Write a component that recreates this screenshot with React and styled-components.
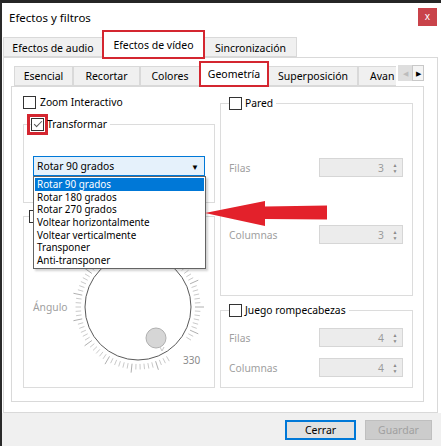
import React from 'react'
import styled, { createGlobalStyle } from 'styled-components'

const GlobalStyle = createGlobalStyle`
  html, body { margin: 0; padding: 0; background: #fff; }
  body { font-family: "Noto Sans", "Open Sans", sans-serif; color: #000; }
  * { box-sizing: border-box; }
`

const outerTabs = [
  { label: 'Efectos de audio', w: 100 },
  { label: 'Efectos de vídeo', w: 101, active: true },
  { label: 'Sincronización', w: 93 },
]

const innerTabs = [
  { label: 'Esencial', w: 59 },
  { label: 'Recortar', w: 67 },
  { label: 'Colores', w: 60 },
  { label: 'Geometría', w: 68, active: true },
  { label: 'Superposición', w: 90 },
  { label: 'Avan', w: 38, cut: true },
]

const options = [
  'Rotar 90 grados',
  'Rotar 180 grados',
  'Rotar 270 grados',
  'Voltear horizontalmente',
  'Voltear verticalmente',
  'Transponer',
  'Anti-transponer',
]

export default function App() {
  return (
    <>
      <GlobalStyle />
      <Window>
        <TitleBar>
          <Title>Efectos y filtros</Title>
          <CloseBtn>x</CloseBtn>
        </TitleBar>

        <OuterTabRow>
          {outerTabs.map((t) => (
            <OuterTab key={t.label} $w={t.w} $active={t.active}>{t.label}</OuterTab>
          ))}
        </OuterTabRow>

        <OuterPanel>
          <InnerTabRow>
            <TabStrip>
              {innerTabs.map((t) => (
                <InnerTab key={t.label} $w={t.w} $active={t.active} $cut={t.cut}>{t.label}</InnerTab>
              ))}
            </TabStrip>
            <ScrollBtn $disabled>◀</ScrollBtn>
            <ScrollBtn>▶</ScrollBtn>
          </InnerTabRow>

          <InnerPanel>
            <Column>
              <CheckRow>
                <Box />
                <span>Zoom Interactivo</span>
              </CheckRow>

              <Group $pad="25px 9px 26px 9px" $mt={8}>
                <Legend $ml={-2}>
                  <Box $marked>
                    <CheckMark />
                  </Box>
                  <span>Transformar</span>
                </Legend>
                <ComboWrap>
                  <Combo>
                    <span>Rotar 90 grados</span>
                    <ComboArrow>▼</ComboArrow>
                  </Combo>
                  <DropList>
                    {options.map((o, i) => (
                      <DropItem key={o} $selected={i === 0}>{o}</DropItem>
                    ))}
                  </DropList>
                  <RedArrow width="124" height="30" viewBox="0 0 124 30">
                    <polygon points="0,15 60,3 60,8.5 122,7.5 122,21.5 60,21 60,28" fill="#e3212b" />
                  </RedArrow>
                </ComboWrap>
              </Group>

              <Group $pad="14px 9px 10px 9px" $mt={6}>
                <Legend $ml={-4}>
                  <Box />
                </Legend>
                <DialRow>
                  <Muted>Ángulo</Muted>
                  <Dial />
                </DialRow>
              </Group>
            </Column>

            <Column>
              <Group $pad="48px 9px 51px 8px" $gap={48}>
                <Legend>
                  <Box />
                  <span>Pared</span>
                </Legend>
                <SpinRow label="Filas" value={3} />
                <SpinRow label="Columnas" value={3} />
              </Group>

              <Group $pad="11px 9px 10px 8px" $gap={11} $mt={7}>
                <Legend>
                  <Box />
                  <span>Juego rompecabezas</span>
                </Legend>
                <SpinRow label="Filas" value={4} />
                <SpinRow label="Columnas" value={4} />
              </Group>
            </Column>
          </InnerPanel>
        </OuterPanel>

        <Footer>
          <Button $primary>Cerrar</Button>
          <Button $disabled>Guardar</Button>
        </Footer>
      </Window>
    </>
  )
}

function SpinRow({ label, value }) {
  return (
    <Row>
      <Muted>{label}</Muted>
      <Spin>
        <SpinValue>{value}</SpinValue>
        <SpinArrows>
          <span>▲</span>
          <span>▼</span>
        </SpinArrows>
      </Spin>
    </Row>
  )
}

function Dial() {
  const cx = 70
  const cy = 70
  const ticks = []
  for (let a = 0; a < 360; a += 4) {
    if (a >= 34 && a <= 56) continue
    const rad = (a * Math.PI) / 180
    const major = a % 24 === 0
    const r1 = 57
    const r2 = major ? 66 : 62.5
    ticks.push(
      <line
        key={a}
        x1={cx + r1 * Math.cos(rad)}
        y1={cy + r1 * Math.sin(rad)}
        x2={cx + r2 * Math.cos(rad)}
        y2={cy + r2 * Math.sin(rad)}
        stroke={major ? '#b0b0b0' : '#cacaca'}
        strokeWidth="1"
      />
    )
  }
  return (
    <svg width="140" height="140" viewBox="0 0 140 140">
      {ticks}
      <circle cx={cx} cy={cy} r="53" fill="#fff" stroke="#5a5a5a" strokeWidth="1" />
      <circle cx="88" cy="101" r="10" fill="#d6d6d6" stroke="#b0b0b0" strokeWidth="1" />
      <path d="M92 110 L94 114 L96 110" fill="none" stroke="#c8c8c8" strokeWidth="1" />
      <text x="115" y="127" fontSize="10" fill="#8a8a8a" fontFamily="Noto Sans, sans-serif">330</text>
    </svg>
  )
}

const Window = styled.div`
  width: 441px;
  height: 446px;
  display: flex;
  flex-direction: column;
  border-left: 2px solid #2a2a2a;
  border-top: 3px solid #262626;
  background: #fff;
  overflow: hidden;
`

const TitleBar = styled.div`
  height: 28px;
  flex: none;
  display: flex;
  align-items: center;
  justify-content: space-between;
  padding: 0 4px 0 7px;
`

const Title = styled.div`
  font-size: 11.5px;
`

const CloseBtn = styled.div`
  width: 19px;
  height: 18px;
  background: #c9434a;
  color: #fff;
  font-size: 10px;
  display: flex;
  align-items: center;
  justify-content: center;
  padding-bottom: 2px;
`

const OuterTabRow = styled.div`
  height: 26px;
  flex: none;
  display: flex;
  align-items: flex-end;
  padding-left: 1px;
`

const OuterTab = styled.div`
  width: ${(p) => p.$w}px;
  height: ${(p) => (p.$active ? 27 : 20)}px;
  margin-bottom: ${(p) => (p.$active ? -1 : 0)}px;
  background: ${(p) => (p.$active ? '#fff' : '#f0f0f0')};
  border: 1px solid #d9d9d9;
  border-bottom: ${(p) => (p.$active ? 'none' : '1px solid #d9d9d9')};
  outline: ${(p) => (p.$active ? '2px solid #d42630' : 'none')};
  outline-offset: -1px;
  position: relative;
  z-index: ${(p) => (p.$active ? 2 : 0)};
  display: flex;
  align-items: center;
  justify-content: center;
  font-size: 10.5px;
  padding-top: ${(p) => (p.$active ? 0 : 1)}px;
`

const OuterPanel = styled.div`
  width: 435px;
  height: 356px;
  flex: none;
  margin-left: 1px;
  border: 1px solid #d9d9d9;
  padding: 0 13px 10px 7px;
  display: flex;
  flex-direction: column;
`

const InnerTabRow = styled.div`
  height: 28px;
  flex: none;
  display: flex;
  align-items: flex-start;
  padding-left: 3px;
`

const TabStrip = styled.div`
  flex: 1;
  height: 29px;
  display: flex;
  align-items: flex-end;
  overflow: hidden;
`

const InnerTab = styled.div`
  flex: none;
  width: ${(p) => p.$w}px;
  height: ${(p) => (p.$active ? 24 : 20)}px;
  margin-bottom: 1px;
  background: ${(p) => (p.$active ? '#fff' : '#f0f0f0')};
  border: 1px solid #d9d9d9;
  border-right: ${(p) => (p.$cut ? 'none' : '1px solid #d9d9d9')};
  border-bottom: ${(p) => (p.$active ? '1px solid #fff' : '1px solid #d9d9d9')};
  outline: ${(p) => (p.$active ? '2px solid #d42630' : 'none')};
  outline-offset: -1px;
  position: relative;
  z-index: ${(p) => (p.$active ? 2 : 0)};
  display: flex;
  align-items: center;
  justify-content: ${(p) => (p.$cut ? 'flex-start' : 'center')};
  padding-left: ${(p) => (p.$cut ? 11 : 0)}px;
  font-size: 10.5px;
  white-space: nowrap;
`

const ScrollBtn = styled.div`
  flex: none;
  width: ${(p) => (p.$disabled ? 14 : 12)}px;
  height: 16px;
  margin-top: 7px;
  background: ${(p) => (p.$disabled ? '#dedede' : '#f4f4f4')};
  border: 1px solid ${(p) => (p.$disabled ? '#dedede' : '#c8c8c8')};
  color: ${(p) => (p.$disabled ? '#bcbcbc' : '#000')};
  font-size: 7px;
  display: flex;
  align-items: center;
  justify-content: center;
`

const InnerPanel = styled.div`
  height: 316px;
  flex: none;
  border: 1px solid #d9d9d9;
  padding: 9px 10px 13px 11px;
  display: grid;
  grid-template-columns: 192px 193px;
  column-gap: 5px;
  align-items: start;
  font-size: 10.3px;
`

const Column = styled.div`
  display: flex;
  flex-direction: column;
`

const CheckRow = styled.div`
  height: 13px;
  display: flex;
  align-items: center;
  gap: 4px;
  line-height: 13px;
`

const Box = styled.span`
  flex: none;
  width: 13px;
  height: 13px;
  border: 1px solid #333;
  background: #fff;
  display: inline-flex;
  align-items: center;
  justify-content: center;
  outline: ${(p) => (p.$marked ? '3px solid #d42630' : 'none')};
  outline-offset: 1px;
`

const CheckMark = styled.span`
  width: 8px;
  height: 4px;
  border-left: 1.5px solid #555;
  border-bottom: 1.5px solid #555;
  transform: translateY(-1px) rotate(-45deg);
`

const Group = styled.fieldset`
  margin: ${(p) => p.$mt || 0}px 0 0 0;
  padding: ${(p) => p.$pad};
  min-width: 0;
  border: 1px solid #dcdcdc;
  display: flex;
  flex-direction: column;
  gap: ${(p) => p.$gap || 0}px;
`

const Legend = styled.legend`
  height: 14px;
  padding: 0 3px 0 0;
  margin-left: ${(p) => p.$ml || 0}px;
  display: flex;
  align-items: center;
  gap: 3px;
  line-height: 14px;
  background: #fff;
`

const ComboWrap = styled.div`
  position: relative;
  width: 172px;
`

const Combo = styled.div`
  height: 20px;
  border: 1px solid #0078d7;
  background: #e5f1fb;
  padding: 0 0 0 3px;
  display: flex;
  align-items: center;
  justify-content: space-between;
`

const ComboArrow = styled.span`
  font-size: 8px;
  width: 18px;
  text-align: center;
`

const DropList = styled.div`
  position: absolute;
  top: 100%;
  left: 0;
  width: 173px;
  border: 1px solid #646464;
  padding: 1px;
  background: #fff;
  box-shadow: 2px 2px 2px rgba(0, 0, 0, 0.18);
  z-index: 5;
`

const DropItem = styled.div`
  height: 12.7px;
  line-height: 12.7px;
  padding-left: 2px;
  font-size: 9.9px;
  white-space: nowrap;
  background: ${(p) => (p.$selected ? '#0078d7' : 'transparent')};
  color: ${(p) => (p.$selected ? '#fff' : '#000')};
`

const RedArrow = styled.svg`
  position: absolute;
  left: 172px;
  top: 42px;
  z-index: 6;
`

const DialRow = styled.div`
  display: grid;
  grid-template-columns: 35px 140px;
  align-items: center;
`

const Muted = styled.span`
  color: #a0a0a0;
`

const Row = styled.div`
  height: 19px;
  display: flex;
  align-items: center;
  justify-content: space-between;
`

const Spin = styled.div`
  width: 84px;
  height: 19px;
  background: #ececec;
  border: 1px solid #d6d6d6;
  display: flex;
  align-items: center;
  justify-content: flex-end;
`

const SpinValue = styled.span`
  color: #9a9a9a;
  margin-right: 4px;
`

const SpinArrows = styled.span`
  width: 14px;
  display: flex;
  flex-direction: column;
  align-items: center;
  color: #8a8a8a;
  font-size: 5px;
  line-height: 6px;
`

const Footer = styled.div`
  flex: 1;
  background: #f0f0f0;
  display: flex;
  align-items: center;
  justify-content: flex-end;
  gap: 9px;
  padding: 1px 9px 0 0;
`

const Button = styled.div`
  height: 20px;
  width: ${(p) => (p.$primary ? 71 : 67)}px;
  display: flex;
  align-items: center;
  justify-content: center;
  font-size: 10.5px;
  background: ${(p) => (p.$disabled ? '#cccccc' : '#e1e1e1')};
  border: ${(p) => (p.$primary ? '2px solid #0078d7' : '1px solid #bfbfbf')};
  color: ${(p) => (p.$disabled ? '#a0a0a0' : '#000')};
`
